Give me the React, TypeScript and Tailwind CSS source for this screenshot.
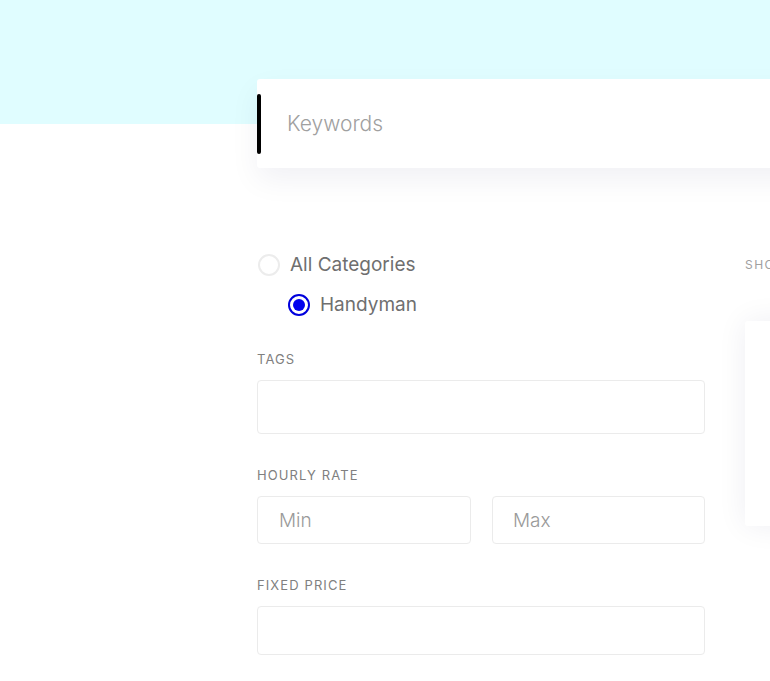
import React from "react";

export default function App() {
  const font = { fontFamily: "Inter, 'Noto Sans', sans-serif" };
  return (
    <div className="relative w-[770px] h-[681px] overflow-hidden bg-white" style={font}>
      <div className="h-[124px] bg-[#e0fdff]" />
      <div className="ml-[257px] -mt-[45px] w-[600px] h-[89px] bg-white rounded-[3px] shadow-[0_12px_30px_rgba(20,20,80,0.06)] flex items-center relative">
        <div className="absolute left-0 top-[15px] w-[4px] h-[60px] bg-black rounded-[2px]" />
        <span className="pl-[30px] text-[21px] text-[#a0a0a0] font-light">Keywords</span>
      </div>
      <div className="ml-[257px] mt-[81px] flex gap-[40px]">
        <div className="w-[448px] shrink-0">
          <div className="h-[30px] flex items-center pt-[2px]">
            <span className="w-[22px] h-[22px] rounded-full border-2 border-[#ececec] bg-white ml-[1px]" />
            <span className="ml-[10px] text-[19px] text-[#6f6f6f]">All Categories</span>
          </div>
          <div className="h-[30px] mt-[10px] flex items-center pl-[31px] pt-[2px]">
            <span className="w-[22px] h-[22px] rounded-full border-2 border-[#0000dd] bg-white flex items-center justify-center">
              <span className="w-[12px] h-[12px] rounded-full bg-[#0000ee]" />
            </span>
            <span className="ml-[10px] text-[19px] text-[#6f6f6f]">Handyman</span>
          </div>
          <div className="mt-[30px] h-[20px] leading-[20px] text-[13px] tracking-[1.1px] text-[#808080]">TAGS</div>
          <div className="mt-[11px] h-[54px] border border-[#ebebeb] rounded-[4px]" />
          <div className="mt-[31px] h-[20px] leading-[20px] text-[13px] tracking-[1.1px] text-[#808080]">HOURLY RATE</div>
          <div className="mt-[11px] flex gap-[21px]">
            <div className="flex-1 h-[48px] border border-[#ebebeb] rounded-[4px] flex items-center pl-[21px] pt-[2px] text-[19px] text-[#9a9a9a] font-light">Min</div>
            <div className="flex-1 h-[48px] border border-[#ebebeb] rounded-[4px] flex items-center pl-[20px] pt-[2px] text-[19px] text-[#9a9a9a] font-light">Max</div>
          </div>
          <div className="mt-[31px] h-[20px] leading-[20px] text-[13px] tracking-[1.1px] text-[#808080]">FIXED PRICE</div>
          <div className="mt-[11px] h-[49px] border border-[#ebebeb] rounded-[4px]" />
        </div>
        <div className="w-[300px] shrink-0">
          <div className="h-[30px] flex items-center pt-[2px] text-[12px] tracking-[1.5px] text-[#a0a0a0] whitespace-nowrap">SHOW RESULTS</div>
          <div className="mt-[42px] h-[205px] bg-white rounded-[3px] shadow-[0_0_30px_rgba(20,20,80,0.07)]" />
        </div>
      </div>
    </div>
  );
}
